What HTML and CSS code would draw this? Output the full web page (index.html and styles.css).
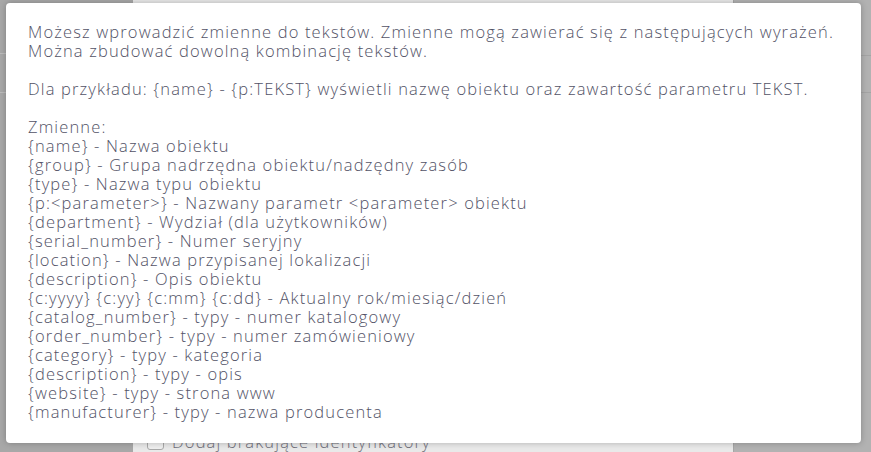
FILE: index.html
```html
<!DOCTYPE html>
<html lang="pl">
<head>
<meta charset="utf-8">
<title>Zmienne</title>
<link rel="stylesheet" href="styles.css">
</head>
<body>
<div class="page">
  <div class="side side-left">
    <div class="rule rule-a"></div>
    <div class="rule rule-b"></div>
  </div>
  <div class="panel">
    <div class="panel-spacer"></div>
    <label class="check-row"><span class="check-box"></span><span class="check-label">Dodaj brakujące identyfikatory</span></label>
  </div>
  <div class="side side-right">
    <div class="rule rule-c"></div>
    <div class="rule rule-d"></div>
  </div>
</div>

<div class="modal">
  <p class="para">Możesz wprowadzić zmienne do tekstów. Zmienne mogą zawierać się z następujących wyrażeń.<br>Można zbudować dowolną kombinację tekstów.</p>
  <p class="para">Dla przykładu: {name} - {p:TEKST} wyświetli nazwę obiektu oraz zawartość parametru TEKST.</p>
  <p class="para">Zmienne:<br>
  {name} - Nazwa obiektu<br>
  {group} - Grupa nadrzędna obiektu/nadzędny zasób<br>
  {type} - Nazwa typu obiektu<br>
  {p:&lt;parameter&gt;} - Nazwany parametr &lt;parameter&gt; obiektu<br>
  {department} - Wydział (dla użytkowników)<br>
  {serial_number} - Numer seryjny<br>
  {location} - Nazwa przypisanej lokalizacji<br>
  {description} - Opis obiektu<br>
  {c:yyyy} {c:yy} {c:mm} {c:dd} - Aktualny rok/miesiąc/dzień<br>
  {catalog_number} - typy - numer katalogowy<br>
  {order_number} - typy - numer zamówieniowy<br>
  {category} - typy - kategoria<br>
  {description} - typy - opis<br>
  {website} - typy - strona www<br>
  {manufacturer} - typy - nazwa producenta</p>
</div>
</body>
</html>
```

FILE: styles.css
```css
html, body {
  margin: 0;
  padding: 0;
  height: 100%;
}

body {
  background: #a9a9a9;
  overflow: hidden;
  font-family: "Open Sans", "Liberation Sans", sans-serif;
}

.page {
  display: flex;
  height: 452px;
}

.side {
  display: flex;
  flex-direction: column;
}

.side-left {
  width: 133px;
  background: #a8a8a8;
}

.side-right {
  flex: 1;
  background: #b2b2b2;
  border-left: 1px solid #a6a6a6;
}

.rule {
  height: 1px;
  background: #bcbcbc;
}

.rule-a { margin-top: 53px; }
.rule-b { margin-top: 38px; }
.rule-c { margin-top: 55px; background: #a4a4a4; }
.rule-d { margin-top: 36px; background: #a4a4a4; }

.panel {
  width: 600px;
  background: #e9e9e9;
  display: flex;
  flex-direction: column;
}

.panel-spacer {
  flex: 1;
}

.check-row {
  display: flex;
  align-items: center;
  gap: 8px;
  padding: 0 0 1px 14px;
  height: 20px;
  font-size: 16.5px;
  font-weight: 300;
  letter-spacing: 1.15px;
  color: #6f6f7a;
}

.check-box {
  width: 15px;
  height: 15px;
  border: 1px solid #a9a9a9;
  border-radius: 3px;
  background: #efefef;
}

.modal {
  position: absolute;
  left: 6px;
  top: 3px;
  width: 855px;
  height: 440px;
  box-sizing: border-box;
  padding: 19px 22px;
  background: #ffffff;
  border-radius: 4px;
  box-shadow: 0 0 6px rgba(0, 0, 0, 0.25);
  color: #525266;
  font-size: 16.5px;
  font-weight: 300;
  letter-spacing: 1.15px;
  line-height: 19px;
  white-space: nowrap;
}

.para {
  margin: 0 0 19px 0;
}
```
